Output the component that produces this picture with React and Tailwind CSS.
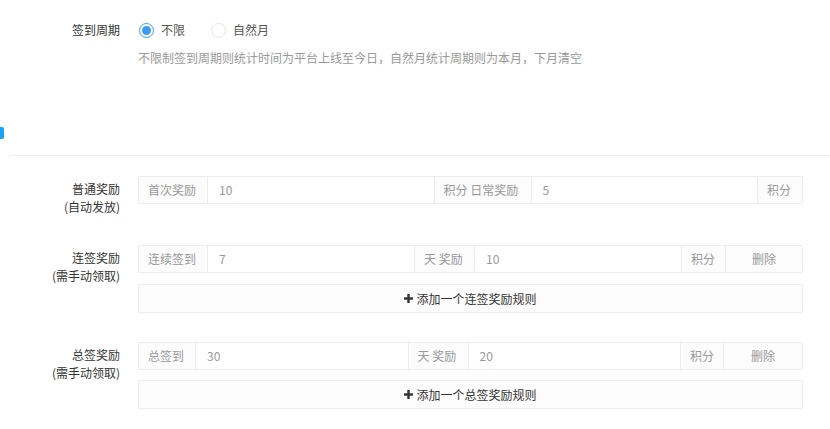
import React from 'react';

const font = { fontFamily: '"Microsoft YaHei", "Noto Sans CJK SC", "Noto Sans", sans-serif' };

function Radio({ checked, label }) {
  return (
    <label className="flex items-center gap-[7px] text-[12px] text-[#555]">
      {checked ? (
        <span className="flex h-[15px] w-[15px] items-center justify-center rounded-full border border-[#3d9bef] bg-white">
          <span className="h-[9px] w-[9px] rounded-full bg-[#3d9bef]" />
        </span>
      ) : (
        <span className="h-[15px] w-[15px] rounded-full border border-[#e2e2e2] bg-white" />
      )}
      {label}
    </label>
  );
}

function Addon({ w, children, center }) {
  return (
    <div
      className={`flex shrink-0 items-center whitespace-nowrap ${center ? 'justify-center' : 'px-[9px]'} bg-[#fcfcfc] text-[#999] border-l border-[#ececec] first:border-l-0`}
      style={{ width: w }}
    >
      {children}
    </div>
  );
}

function Field({ value }) {
  return (
    <div className="flex flex-1 items-center border-l border-[#ececec] bg-white px-[11px] text-[#999]">
      {value}
    </div>
  );
}

function PlusIcon() {
  return (
    <svg width="9" height="9" viewBox="0 0 9 9" className="mr-[3px]">
      <rect x="3.3" y="0" width="2.4" height="9" fill="#333" />
      <rect x="0" y="3.3" width="9" height="2.4" fill="#333" />
    </svg>
  );
}

function AddButton({ text }) {
  return (
    <div className="flex h-[29px] items-center justify-center rounded-[2px] border border-[#ececec] bg-[#fcfcfc] text-[12px] text-[#333]">
      <PlusIcon />
      {text}
    </div>
  );
}

function RowLabel({ title, sub }) {
  return (
    <div className="h-[28px] w-[120px] shrink-0 pt-[4px] text-right text-[12px] leading-[18px] text-[#333]">
      <div>{title}</div>
      <div>{sub}</div>
    </div>
  );
}

export default function App() {
  return (
    <div className="h-[429px] w-[830px] overflow-hidden bg-white" style={font}>
      <div className="flex gap-[18px] pt-[20px]">
        <div className="w-[120px] shrink-0 text-right text-[12px] leading-[20px] text-[#333]">签到周期</div>
        <div>
          <div className="flex h-[20px] items-center gap-[26px] pl-px">
            <Radio checked label="不限" />
            <Radio label="自然月" />
          </div>
          <div className="mt-[9px] text-[12px] leading-[18px] text-[#999]">
            不限制签到周期则统计时间为平台上线至今日，自然月统计周期则为本月，下月清空
          </div>
        </div>
      </div>

      <div className="mt-[60px] h-[12px] w-[4px] rounded-r-[2px] bg-[#1aa3f5]" />
      <div className="ml-[10px] mt-[16px] h-px bg-[#eeeeee]" />

      <div className="mt-[20px] flex gap-[18px]">
        <RowLabel title="普通奖励" sub="(自动发放)" />
        <div className="flex h-[28px] w-[665px] rounded-[2px] border border-[#ececec] text-[12px]">
          <Addon w={68}>首次奖励</Addon>
          <Field value="10" />
          <Addon w={97}>积分 日常奖励</Addon>
          <Field value="5" />
          <Addon w={45}>积分</Addon>
        </div>
      </div>

      <div className="mt-[41px] flex gap-[18px]">
        <RowLabel title="连签奖励" sub="(需手动领取)" />
        <div className="w-[665px]">
          <div className="flex h-[28px] rounded-[2px] border border-[#ececec] text-[12px]">
            <Addon w={68}>连续签到</Addon>
            <Field value="7" />
            <Addon w={60}>天 奖励</Addon>
            <Field value="10" />
            <Addon w={44}>积分</Addon>
            <Addon w={77} center>删除</Addon>
          </div>
          <div className="mt-[11px]">
            <AddButton text="添加一个连签奖励规则" />
          </div>
        </div>
      </div>

      <div className="mt-[29px] flex gap-[18px]">
        <RowLabel title="总签奖励" sub="(需手动领取)" />
        <div className="w-[665px]">
          <div className="flex h-[28px] rounded-[2px] border border-[#ececec] text-[12px]">
            <Addon w={56}>总签到</Addon>
            <Field value="30" />
            <Addon w={60}>天 奖励</Addon>
            <Field value="20" />
            <Addon w={43}>积分</Addon>
            <Addon w={79} center>删除</Addon>
          </div>
          <div className="mt-[10px]">
            <AddButton text="添加一个总签奖励规则" />
          </div>
        </div>
      </div>
    </div>
  );
}
